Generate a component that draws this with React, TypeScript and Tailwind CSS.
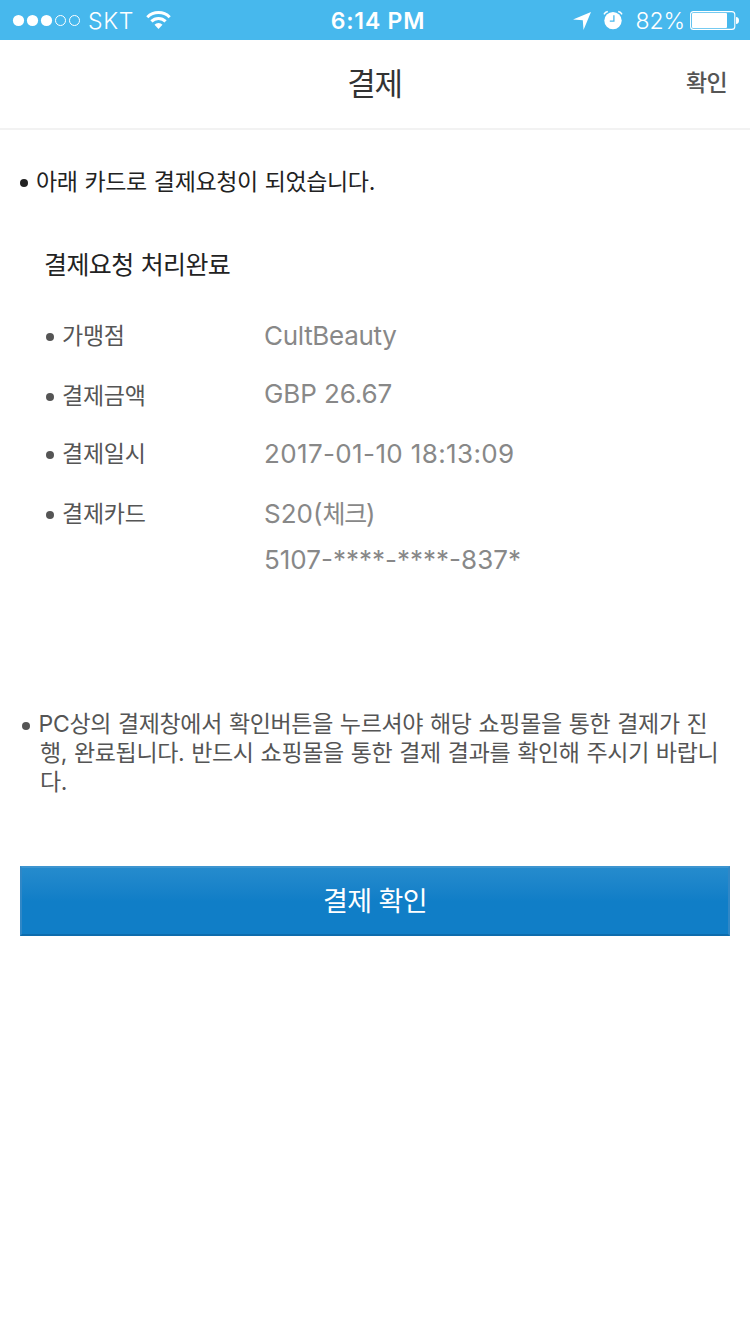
import type { ReactNode } from 'react';

const FONT = "font-['Inter','Noto_Sans_CJK_KR',sans-serif]";

function StatusBar() {
  return (
    <div className="flex h-10 items-center bg-[#47b8ed] text-white">
      <div className="flex w-[250px] items-center pl-[12px]">
        <svg width="70" height="14" viewBox="0 0 70 14" fill="white">
          <circle cx="6.5" cy="7.5" r="5.6" />
          <circle cx="20.5" cy="7.5" r="5.6" />
          <circle cx="34.5" cy="7.5" r="5.6" />
          <circle cx="48.5" cy="7.5" r="5" fill="none" stroke="white" />
          <circle cx="62.5" cy="7.5" r="5" fill="none" stroke="white" />
        </svg>
        <span className="ml-[6px] w-[58px] pt-[2px] text-[23px] leading-[38px] font-light tracking-[0.7px]">SKT</span>
        <svg width="25" height="20" viewBox="0 0 25 20" fill="none" stroke="white" strokeWidth="3">
          <path d="M1.3 7.2a15.8 15.8 0 0 1 22.4 0" />
          <path d="M5.4 11.4a10 10 0 0 1 14.2 0" />
          <path d="M8.5 14.8a5.6 5.6 0 0 1 8 0L12.5 18.9Z" fill="white" stroke="none" />
        </svg>
      </div>
      <div className="w-[256px] pt-[2px] text-center text-[23px] leading-[38px] font-semibold tracking-[0.8px]">6:14 PM</div>
      <div className="flex flex-1 items-center justify-end pr-[10px]">
        <svg width="18" height="18" viewBox="0 0 18 18" fill="white" className="mt-[2px] mr-[12px]">
          <path d="M18 0L10.5 18L9.8 8.3L0 7.5Z" />
        </svg>
        <svg width="20" height="20" viewBox="0 0 20 20" className="mr-[13px]">
          <circle cx="10" cy="10.6" r="8.7" fill="white" />
          <path d="M1 4.4A5.2 5.2 0 0 1 4.8 1.6M19 4.4A5.2 5.2 0 0 0 15.2 1.6" fill="none" stroke="white" strokeWidth="1.5" />
          <path d="M10.9 5.2V11.2H6.8" fill="none" stroke="#47b8ed" strokeWidth="1.3" />
        </svg>
        <span className="mr-[5px] pt-[2px] text-[23px] leading-[38px] font-light tracking-[-0.1px]">82%</span>
        <svg width="50" height="20" viewBox="0 0 50 20">
          <rect x="0.6" y="1.6" width="44.2" height="17.8" rx="3" fill="none" stroke="white" strokeWidth="1.1" />
          <rect x="2" y="3" width="35" height="15" rx="1" fill="white" />
          <path d="M46 7Q49 7.3 49 10.5T46 14Z" fill="white" />
        </svg>
      </div>
    </div>
  );
}

function Dot({ className }: { className: string }) {
  return <span className={`size-[7.6px] shrink-0 rounded-full ${className}`} />;
}

interface RowProps {
  label: string;
  className: string;
  valueClass: string;
  children: ReactNode;
}

function Row({ label, className, valueClass, children }: RowProps) {
  return (
    <div className={`flex items-start ${className}`}>
      <Dot className="mt-[18px] mr-[8.4px] bg-[#555]" />
      <dt className="w-[202px] pt-px text-[23px] leading-10 tracking-[-0.25px] text-[#555]">{label}</dt>
      <dd className={`text-[26px] text-[#888] ${valueClass}`}>{children}</dd>
    </div>
  );
}

export default function App() {
  return (
    <div className={`${FONT} min-h-[1334px] w-[750px] bg-white`}>
      <StatusBar />
      <header className="grid h-[90px] grid-cols-[1fr_auto_1fr] items-center border-b-2 border-[#f2f2f2]">
        <h1 className="col-start-2 pr-px text-[31px] leading-[86px] tracking-[-1.2px] text-[#333]">결제</h1>
        <button className="justify-self-end pr-[23px] pb-[2px] text-[23px] leading-10 font-medium tracking-[-0.6px] text-[#555]">확인</button>
      </header>

      <main>
        <p className="flex items-start pt-[32px] pl-[20px] text-[23px] leading-10 tracking-[-0.38px] text-[#222] [word-spacing:0.9px]">
          <Dot className="mt-[17px] mr-[8.4px] bg-[#222]" />
          아래 카드로 결제요청이 되었습니다.
        </p>
        <h2 className="mt-[43px] pl-[44px] text-[25px] leading-10 tracking-[-0.6px] text-[#222] [word-spacing:0.6px]">결제요청 처리완료</h2>
        <dl className="pt-[30px] pl-[46px]">
          <Row label="가맹점" className="h-[60px]" valueClass="pt-px leading-10 tracking-[-0.3px]">CultBeauty</Row>
          <Row label="결제금액" className="h-[58px]" valueClass="leading-[38px] tracking-[-0.1px]">GBP 26.67</Row>
          <Row label="결제일시" className="h-[60px]" valueClass="pt-px leading-10 tracking-[0.37px]">2017-01-10 18:13:09</Row>
          <Row label="결제카드" className="h-[190px]" valueClass="pt-px leading-10">
            <p>
              S20(<span className="text-[25px] tracking-[-1.2px]">체크</span>)
            </p>
            <p className="mt-[6px]">5107-****-****-837*</p>
          </Row>
        </dl>
        <div className="flex pt-[27px] pl-[22px] text-[23px] leading-[29px] tracking-[-0.35px] whitespace-nowrap text-[#555] [word-spacing:0.8px]">
          <Dot className="mt-[12px] mr-[9px] bg-[#555]" />
          <div>
            <p>PC상의 결제창에서 확인버튼을 누르셔야 해당 쇼핑몰을 통한 결제가 진</p>
            <p className="pl-[1.4px]">행, 완료됩니다. 반드시 쇼핑몰을 통한 결제 결과를 확인해 주시기 바랍니</p>
            <p className="pl-[1.4px]">다.</p>
          </div>
        </div>
        <div className="px-5 pt-[69px]">
          <button className="h-[70px] w-full border-2 border-t-[#3d95d0] border-r-[#3087c6] border-b-[#0d6cad] border-l-[#3087c6] bg-linear-to-b from-[#258bcd] to-[#107ec7] to-50% pt-[2px] text-[27px] leading-[64px] tracking-[-0.6px] text-white">
            결제 확인
          </button>
        </div>
      </main>
    </div>
  );
}
